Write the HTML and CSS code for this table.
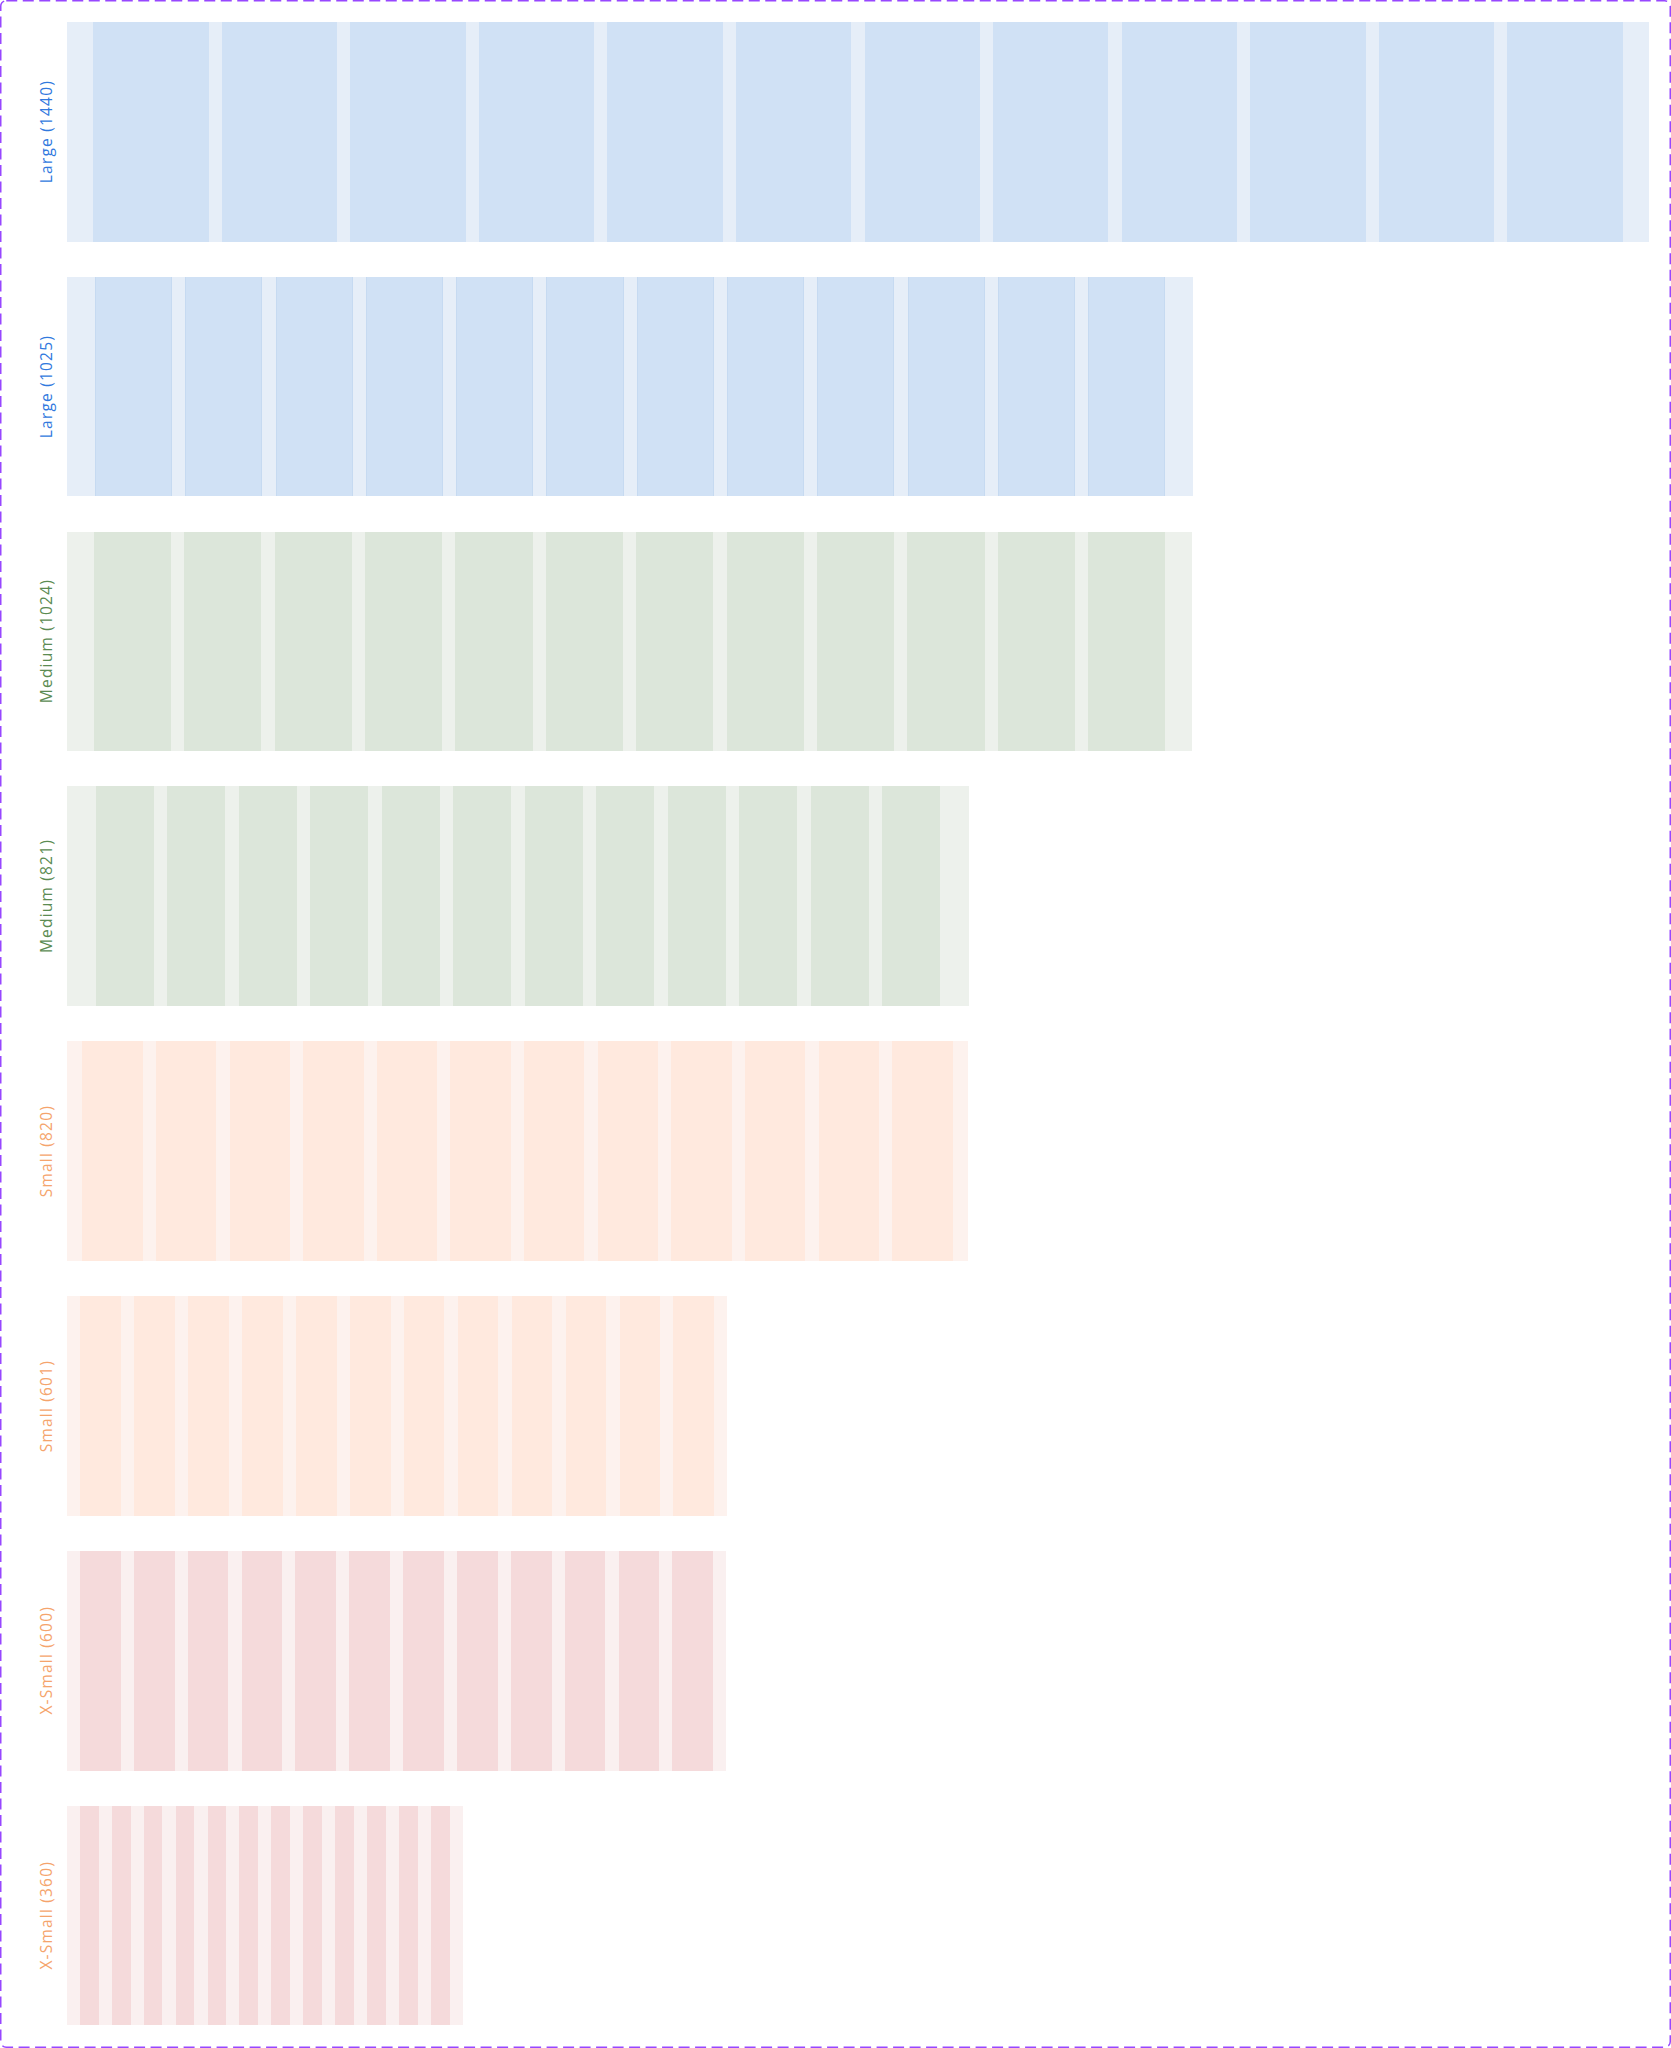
FILE: index.html
```html
<!DOCTYPE html>
<html lang="en">
<head>
<meta charset="utf-8">
<title>Layout grids</title>
<link rel="stylesheet" href="styles.css">
</head>
<body>
<div class="frame">
  <svg class="frame-border" viewBox="0 0 1671 2048" aria-hidden="true">
    <rect x="0.75" y="0.75" width="1669.5" height="2046.5" rx="5.5" ry="5.5"></rect>
  </svg>
  <div class="stack">
    <section class="row">
      <div class="label lg"><span>Large (1440)</span></div>
      <div class="grid lg w1440">
        <i></i><i></i><i></i><i></i><i></i><i></i><i></i><i></i><i></i><i></i><i></i><i></i>
      </div>
    </section>
    <section class="row">
      <div class="label lg"><span>Large (1025)</span></div>
      <div class="grid lg outlined w1025">
        <i></i><i></i><i></i><i></i><i></i><i></i><i></i><i></i><i></i><i></i><i></i><i></i>
      </div>
    </section>
    <section class="row">
      <div class="label md"><span>Medium (1024)</span></div>
      <div class="grid md w1024">
        <i></i><i></i><i></i><i></i><i></i><i></i><i></i><i></i><i></i><i></i><i></i><i></i>
      </div>
    </section>
    <section class="row">
      <div class="label md"><span>Medium (821)</span></div>
      <div class="grid md w821">
        <i></i><i></i><i></i><i></i><i></i><i></i><i></i><i></i><i></i><i></i><i></i><i></i>
      </div>
    </section>
    <section class="row">
      <div class="label sm"><span>Small (820)</span></div>
      <div class="grid sm w820">
        <i></i><i></i><i></i><i></i><i></i><i></i><i></i><i></i><i></i><i></i><i></i><i></i>
      </div>
    </section>
    <section class="row">
      <div class="label sm"><span>Small (601)</span></div>
      <div class="grid sm w601">
        <i></i><i></i><i></i><i></i><i></i><i></i><i></i><i></i><i></i><i></i><i></i><i></i>
      </div>
    </section>
    <section class="row">
      <div class="label xs"><span>X-Small (600)</span></div>
      <div class="grid xs w600">
        <i></i><i></i><i></i><i></i><i></i><i></i><i></i><i></i><i></i><i></i><i></i><i></i>
      </div>
    </section>
    <section class="row">
      <div class="label xs"><span>X-Small (360)</span></div>
      <div class="grid xs w360">
        <i></i><i></i><i></i><i></i><i></i><i></i><i></i><i></i><i></i><i></i><i></i><i></i>
      </div>
    </section>
  </div>
</div>
</body>
</html>
```

FILE: styles.css
```css
html, body {
  margin: 0;
  padding: 0;
  background: #ffffff;
}

.frame {
  position: relative;
  width: 1671px;
  height: 2048px;
  box-sizing: border-box;
  font-family: "Open Sans", "Noto Sans", "Liberation Sans", sans-serif;
}

.frame-border {
  position: absolute;
  left: 0;
  top: 0;
  width: 1671px;
  height: 2048px;
  pointer-events: none;
}

.frame-border rect {
  fill: none;
  stroke: #9747ff;
  stroke-width: 1.5;
  stroke-dasharray: 11 5.5;
}

.stack {
  display: flex;
  flex-direction: column;
  gap: 35.15px;
  padding-top: 21.97px;
}

.row {
  display: flex;
  height: 219.7px;
}

.label {
  width: 67px;
  flex: none;
  box-sizing: border-box;
  padding-left: 27px;
  display: flex;
  align-items: center;
  justify-content: center;
}

.label span {
  writing-mode: vertical-rl;
  transform: rotate(180deg);
  font-size: 15.5px;
  letter-spacing: 1.2px;
  line-height: 1;
  white-space: nowrap;
}

.label.lg { color: #3179de; }
.label.md { color: #5b8b52; }
.label.sm { color: #f5a46c; }
.label.xs { color: #f5a46c; }

.grid {
  display: flex;
  gap: 13.2px;
  box-sizing: border-box;
  flex: none;
}

.grid i {
  flex: 1 1 0;
  display: block;
}

.grid.lg { background: #e6eef8; }
.grid.lg i { background: #d0e1f5; }
.grid.outlined i { box-shadow: inset 1px 0 0 #c6daf1, inset -1px 0 0 #c6daf1; }

.grid.md { background: #edf1ec; }
.grid.md i { background: #dce6da; }

.grid.sm { background: #fdf2ee; }
.grid.sm i { background: #ffe9de; }

.grid.xs { background: #faf0f0; }
.grid.xs i { background: #f5dadb; }

.w1440 { width: 1582px; padding: 0 26.3px; }
.w1025 { width: 1126.1px; padding: 0 28px; }
.w1024 { width: 1125px; padding: 0 26.8px; }
.w821 { width: 902px; padding: 0 28.7px; }
.w820 { width: 900.9px; padding: 0 15.3px; }
.w601 { width: 660.3px; padding: 0 13px; }
.w600 { width: 659.2px; padding: 0 13px; }
.w360 { width: 395.5px; padding: 0 13px; }
```
